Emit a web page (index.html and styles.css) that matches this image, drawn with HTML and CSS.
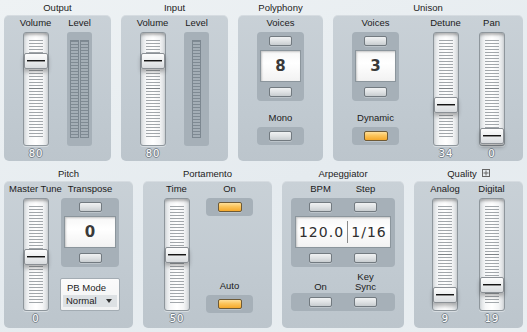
FILE: index.html
```html
<!DOCTYPE html>
<html>
<head>
<meta charset="utf-8">
<link rel="stylesheet" href="styles.css">
</head>
<body>
<div class="app">
  <div class="row row-top">
    <section class="group g-output">
      <div class="title">Output</div>
      <div class="panel p-two">
        <div class="col">
          <div class="label">Volume</div>
          <div class="slider"><div class="ticks"></div><div class="handle" style="top:20px"></div></div>
          <div class="value">80</div>
        </div>
        <div class="col">
          <div class="label">Level</div>
          <div class="meter"><div class="meter-bar"></div><div class="meter-bar"></div></div>
        </div>
      </div>
    </section>

    <section class="group g-input">
      <div class="title">Input</div>
      <div class="panel p-two">
        <div class="col">
          <div class="label">Volume</div>
          <div class="slider"><div class="ticks"></div><div class="handle" style="top:20px"></div></div>
          <div class="value">80</div>
        </div>
        <div class="col">
          <div class="label">Level</div>
          <div class="meter"><div class="meter-bar"></div></div>
        </div>
      </div>
    </section>

    <section class="group g-poly">
      <div class="title">Polyphony</div>
      <div class="panel p-one">
        <div class="col">
          <div class="label">Voices</div>
          <div class="inset stepper">
            <div class="btn"></div>
            <div class="display"><span class="num">8</span></div>
            <div class="btn"></div>
          </div>
          <div class="label label-gap">Mono</div>
          <div class="inset toggle"><div class="btn"></div></div>
        </div>
      </div>
    </section>

    <section class="group g-unison">
      <div class="title">Unison</div>
      <div class="panel p-unison">
        <div class="col">
          <div class="label">Voices</div>
          <div class="inset stepper">
            <div class="btn"></div>
            <div class="display"><span class="num">3</span></div>
            <div class="btn"></div>
          </div>
          <div class="label label-gap">Dynamic</div>
          <div class="inset toggle"><div class="btn btn-on"></div></div>
        </div>
        <div class="col">
          <div class="label">Detune</div>
          <div class="slider"><div class="ticks"></div><div class="handle" style="top:64px"></div></div>
          <div class="value">34</div>
        </div>
        <div class="col">
          <div class="label">Pan</div>
          <div class="slider"><div class="ticks"></div><div class="handle" style="top:95px"></div></div>
          <div class="value">0</div>
        </div>
      </div>
    </section>
  </div>

  <div class="row row-bottom">
    <section class="group g-pitch">
      <div class="title">Pitch</div>
      <div class="panel p-pitch">
        <div class="col">
          <div class="label">Master Tune</div>
          <div class="slider"><div class="ticks"></div><div class="handle" style="top:50px"></div></div>
          <div class="value">0</div>
        </div>
        <div class="col">
          <div class="label">Transpose</div>
          <div class="inset stepper stepper-wide">
            <div class="btn"></div>
            <div class="display"><span class="num">0</span></div>
            <div class="btn"></div>
          </div>
          <div class="pbmode">
            <div class="pb-label">PB Mode</div>
            <div class="dropdown"><span>Normal</span><i class="caret"></i></div>
          </div>
        </div>
      </div>
    </section>

    <section class="group g-porta">
      <div class="title">Portamento</div>
      <div class="panel p-porta">
        <div class="col">
          <div class="label">Time</div>
          <div class="slider"><div class="ticks"></div><div class="handle" style="top:48px"></div></div>
          <div class="value">50</div>
        </div>
        <div class="col">
          <div class="label">On</div>
          <div class="inset toggle"><div class="btn btn-on"></div></div>
          <div class="label auto-gap">Auto</div>
          <div class="inset toggle"><div class="btn btn-on"></div></div>
        </div>
      </div>
    </section>

    <section class="group g-arp">
      <div class="title">Arpeggiator</div>
      <div class="panel p-one">
        <div class="col">
          <div class="pair pair-labels"><span>BPM</span><span>Step</span></div>
          <div class="inset arp-inset">
            <div class="pair"><div class="btn"></div><div class="btn"></div></div>
            <div class="display display-arp">
              <span class="arp-num arp-bpm">120.0</span>
              <i class="divider"></i>
              <span class="arp-num arp-step">1/16</span>
            </div>
            <div class="pair"><div class="btn"></div><div class="btn"></div></div>
          </div>
          <div class="pair pair-labels2"><span>On</span><span>Key<br>Sync</span></div>
          <div class="inset arp-toggles">
            <div class="pair"><div class="btn"></div><div class="btn"></div></div>
          </div>
        </div>
      </div>
    </section>

    <section class="group g-quality">
      <div class="title title-icon">Quality
        <svg class="qicon" width="8" height="8" viewBox="0 0 8 8"><rect x="0.5" y="0.5" width="7" height="7" fill="none" stroke="#666" stroke-width="1"/><path d="M4 1.5V6.5M1.5 4H6.5" stroke="#666" stroke-width="1"/></svg>
      </div>
      <div class="panel p-quality">
        <div class="col">
          <div class="label">Analog</div>
          <div class="slider"><div class="ticks"></div><div class="handle" style="top:88px"></div></div>
          <div class="value">9</div>
        </div>
        <div class="col">
          <div class="label">Digital</div>
          <div class="slider"><div class="ticks"></div><div class="handle" style="top:78px"></div></div>
          <div class="value">19</div>
        </div>
      </div>
    </section>
  </div>
</div>
</body>
</html>
```

FILE: styles.css
```css
* { box-sizing: border-box; }
html, body { margin: 0; padding: 0; }
body {
  width: 527px;
  height: 332px;
  overflow: hidden;
  background: linear-gradient(160deg, #eef2f4 0%, #e5ebef 55%, #e9eef1 100%);
  font-family: "Liberation Sans", Arial, sans-serif;
  font-size: 9.5px;
  color: #1b1b1b;
}
.app {
  padding-left: 4px;
  display: flex;
  flex-direction: column;
  gap: 5px;
}
.row { display: flex; gap: 10px; }
.group { display: flex; flex-direction: column; }
.g-output { width: 107px; }
.g-input { width: 107px; }
.g-poly { width: 85px; }
.g-unison { width: 190px; }
.g-pitch { width: 129px; }
.g-porta { width: 129px; }
.g-arp { width: 122px; }
.g-quality { width: 109px; }

.title {
  height: 15px;
  line-height: 15px;
  text-align: center;
  color: #222;
  white-space: nowrap;
}
.title-icon {
  display: flex;
  justify-content: center;
  align-items: center;
  gap: 5px;
}
.qicon { display: block; margin-top: -1px; }

.panel {
  border-radius: 5px;
  background: linear-gradient(180deg, #c9d1d7 0%, #c1cad1 60%, #bcc5cc 100%);
  box-shadow: inset 0 1px 0 rgba(255,255,255,0.25);
  display: grid;
  align-items: start;
  padding-top: 1px;
}
.row-top .panel { height: 146px; }
.row-bottom .panel { height: 147px; }

.p-two { padding-left: 9px; grid-template-columns: 45px 43px; }
.p-one { grid-template-columns: 1fr; }
.p-unison { grid-template-columns: 85px 55px 37px; }
.p-pitch { grid-template-columns: 63px 46px; }
.p-porta { grid-template-columns: 67px 39px; }
.p-quality { padding-left: 8px; grid-template-columns: 46px 47px; }

.col {
  display: flex;
  flex-direction: column;
  align-items: center;
}
.label {
  height: 14px;
  line-height: 14px;
  white-space: nowrap;
  color: #1b1b1b;
}
.label-gap { margin-top: 10px; }
.auto-gap { margin-top: 63px; }

/* slider */
.slider {
  position: relative;
  margin-top: 2px;
  width: 26px;
  height: 114px;
  border: 1px solid #8e969c;
  border-radius: 3px;
  background: linear-gradient(90deg, #d9dde0 0%, #f6f7f8 22%, #ffffff 50%, #f4f5f6 78%, #d6dadd 100%);
  box-shadow: inset 0 3px 3px -1px rgba(0,0,0,0.3), 0 1px 0 rgba(255,255,255,0.4);
}
.row-bottom .slider { height: 113px; }
.ticks {
  position: absolute;
  left: 5px;
  right: 5px;
  top: 7px;
  height: 98px;
  background: repeating-linear-gradient(180deg, #a2a7ab 0 1px, transparent 1px 3px);
}
.ticks::after {
  content: "";
  position: absolute;
  left: 0;
  right: 0;
  top: 48px;
  height: 1px;
  background: #7d8286;
}
.handle {
  position: absolute;
  left: 0;
  width: 24px;
  height: 16px;
  border: 1px solid #8b9095;
  border-radius: 2px;
  background: linear-gradient(180deg, #fdfdfd 0%, #eef0f1 45%, #d8dbde 100%);
  box-shadow: 0 3px 4px rgba(0,0,0,0.3);
}
.handle::after {
  content: "";
  position: absolute;
  left: 2px;
  right: 2px;
  top: 6px;
  height: 1px;
  background: #151515;
  box-shadow: 0 1px 0 #8a8a8a;
}
.value {
  margin-top: 1px;
  height: 14px;
  line-height: 14px;
  font-family: "DejaVu Sans", "Liberation Sans", sans-serif;
  font-size: 10px;
  letter-spacing: 1px;
  padding-left: 1px;
  color: #ffffff;
  text-shadow: -1px 0 #7b858d, 1px 0 #7b858d, 0 -1px #7b858d, 0 1px #7b858d;
}

/* level meter */
.meter {
  margin-top: 2px;
  width: 25px;
  height: 114px;
  border-radius: 3px;
  background: #a6b0b8;
  display: flex;
  justify-content: center;
  gap: 1px;
  padding-top: 8px;
}
.meter-bar {
  width: 9px;
  height: 98px;
  border: 1px solid #7c8790;
  background: repeating-linear-gradient(180deg, #7f8a93 0 1px, #a4aeb6 1px 3px);
}

/* insets & buttons */
.inset {
  background: #a6b0b8;
  border-radius: 4px;
  display: flex;
  flex-direction: column;
  align-items: center;
}
.stepper {
  margin-top: 2px;
  width: 47px;
  height: 69px;
  padding-top: 4px;
}
.stepper-wide { width: 58px; }
.stepper .display { margin-top: 4px; margin-bottom: 5px; }
.toggle {
  margin-top: 2px;
  width: 47px;
  height: 18px;
  padding-top: 4px;
}
.btn {
  width: 23px;
  height: 10px;
  border: 1px solid #727a80;
  border-radius: 2px;
  background: linear-gradient(180deg, #f0f2f3 0%, #dfe2e4 50%, #c8cdd0 100%);
  box-shadow: 0 1px 0 rgba(255,255,255,0.25);
}
.btn-on {
  width: 24px;
  border-color: #6e5a36;
  background: linear-gradient(180deg, #ffe09a 0%, #fcc45a 45%, #f5a92c 100%);
}
.display {
  width: 41px;
  height: 32px;
  border: 1px solid #8b959c;
  background: linear-gradient(180deg, #f7f7f7 0%, #ffffff 40%, #f2f2f2 100%);
  box-shadow: inset 1px 1px 2px rgba(0,0,0,0.2);
  display: flex;
  align-items: center;
  justify-content: center;
}
.stepper-wide .display { width: 52px; }
.num {
  font-family: "DejaVu Sans", sans-serif;
  font-weight: bold;
  font-size: 15px;
  color: #3a3a3a;
}

/* PB mode */
.pbmode {
  margin-top: 11px;
  width: 60px;
  height: 33px;
  border: 1px solid #a3acb3;
  border-radius: 2px;
  background: linear-gradient(180deg, #fbfbfb, #f1f2f3);
  padding: 2px 2px 0 2px;
}
.pb-label {
  height: 13px;
  line-height: 13px;
  padding-left: 4px;
  color: #1b1b1b;
}
.dropdown {
  margin-top: 1px;
  height: 12px;
  background: #dde1e4;
  display: flex;
  align-items: center;
  justify-content: space-between;
  padding: 0 5px 0 3px;
  line-height: 12px;
}
.caret {
  width: 0;
  height: 0;
  border-left: 3.5px solid transparent;
  border-right: 3.5px solid transparent;
  border-top: 4px solid #333;
}

/* arpeggiator */
.pair {
  width: 104px;
  display: grid;
  grid-template-columns: 45px 45px;
  padding: 0 7px;
  justify-items: center;
  align-items: end;
}
.pair-labels span { height: 14px; line-height: 14px; }
.pair-labels2 {
  margin-top: 5px;
  height: 20px;
  line-height: 10px;
  text-align: center;
}
.arp-inset {
  margin-top: 2px;
  width: 104px;
  height: 69px;
  padding-top: 4px;
}
.display-arp {
  width: 96px;
  margin-top: 4px;
  margin-bottom: 5px;
  justify-content: flex-start;
}
.arp-num {
  font-family: "DejaVu Sans", sans-serif;
  font-size: 14px;
  letter-spacing: 1px;
  color: #2e2e2e;
  text-align: center;
}
.arp-bpm { width: 51px; }
.arp-step { flex: 1; }
.divider {
  width: 1px;
  height: 22px;
  background: #8a8a8a;
}
.arp-toggles {
  margin-top: 1px;
  width: 104px;
  height: 18px;
  padding-top: 4px;
}
```
